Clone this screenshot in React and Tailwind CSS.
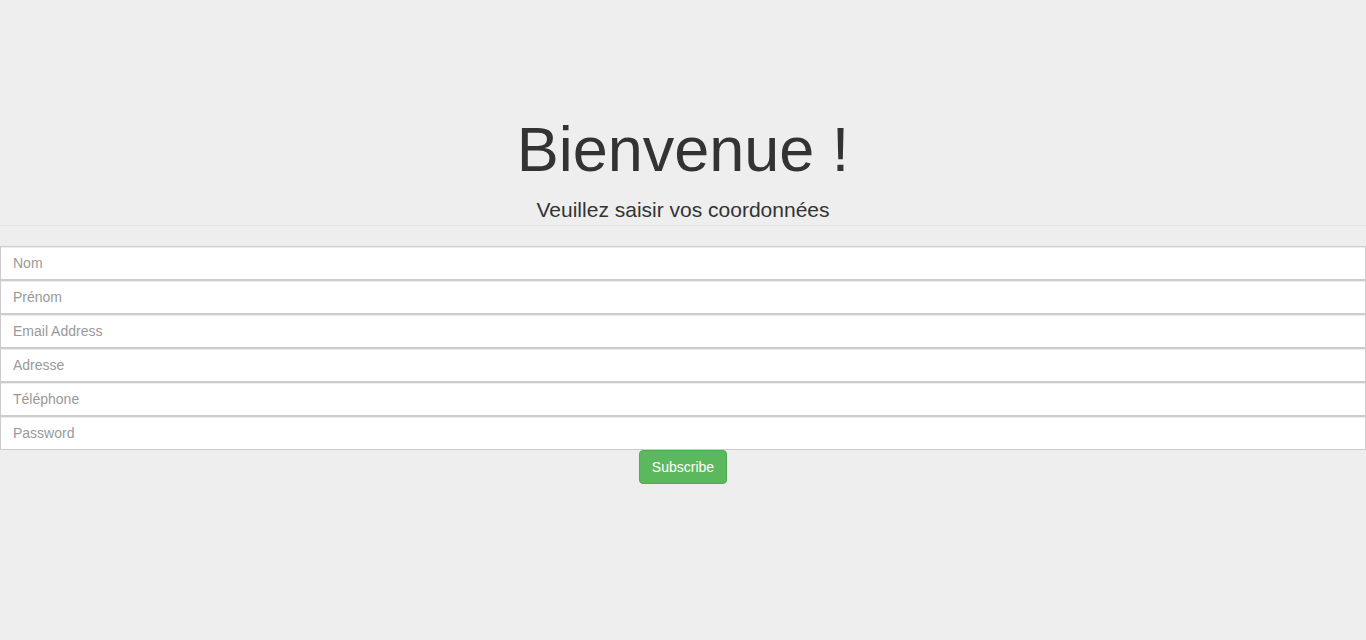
import React from "react";

const fields = [
  { name: "nom", placeholder: "Nom", type: "text" },
  { name: "prenom", placeholder: "Prénom", type: "text" },
  { name: "email", placeholder: "Email Address", type: "email" },
  { name: "adresse", placeholder: "Adresse", type: "text" },
  { name: "telephone", placeholder: "Téléphone", type: "tel" },
  { name: "password", placeholder: "Password", type: "password" },
];

export default function App() {
  return (
    <div className="min-h-[640px] bg-[#eeeeee] text-[#333333] font-['Liberation_Sans',Arial,sans-serif] text-[14px]">
      <div className="pt-[115px] text-center">
        <h1 className="text-[63px] leading-[1.1] mb-[11px]">Bienvenue !</h1>
        <p className="text-[21px] leading-[30px]">Veuillez saisir vos coordonnées</p>
      </div>
      <hr className="border-0 border-t border-[#e3e3e3] mb-5" />

      <form className="flex flex-col" onSubmit={(e) => e.preventDefault()}>
        {fields.map((f) => (
          <input
            key={f.name}
            name={f.name}
            type={f.type}
            placeholder={f.placeholder}
            className="block w-full h-[34px] px-3 bg-white border border-[#cccccc] shadow-[inset_0_1px_1px_rgba(0,0,0,0.075)] text-[14px] text-[#555555] placeholder:text-[#999999] outline-none"
          />
        ))}
        <div className="flex justify-center">
          <button
            type="submit"
            className="h-[34px] px-3 rounded bg-[#5cb85c] border border-[#4cae4c] text-white text-[14px] leading-[20px]"
          >
            Subscribe
          </button>
        </div>
      </form>
    </div>
  );
}
